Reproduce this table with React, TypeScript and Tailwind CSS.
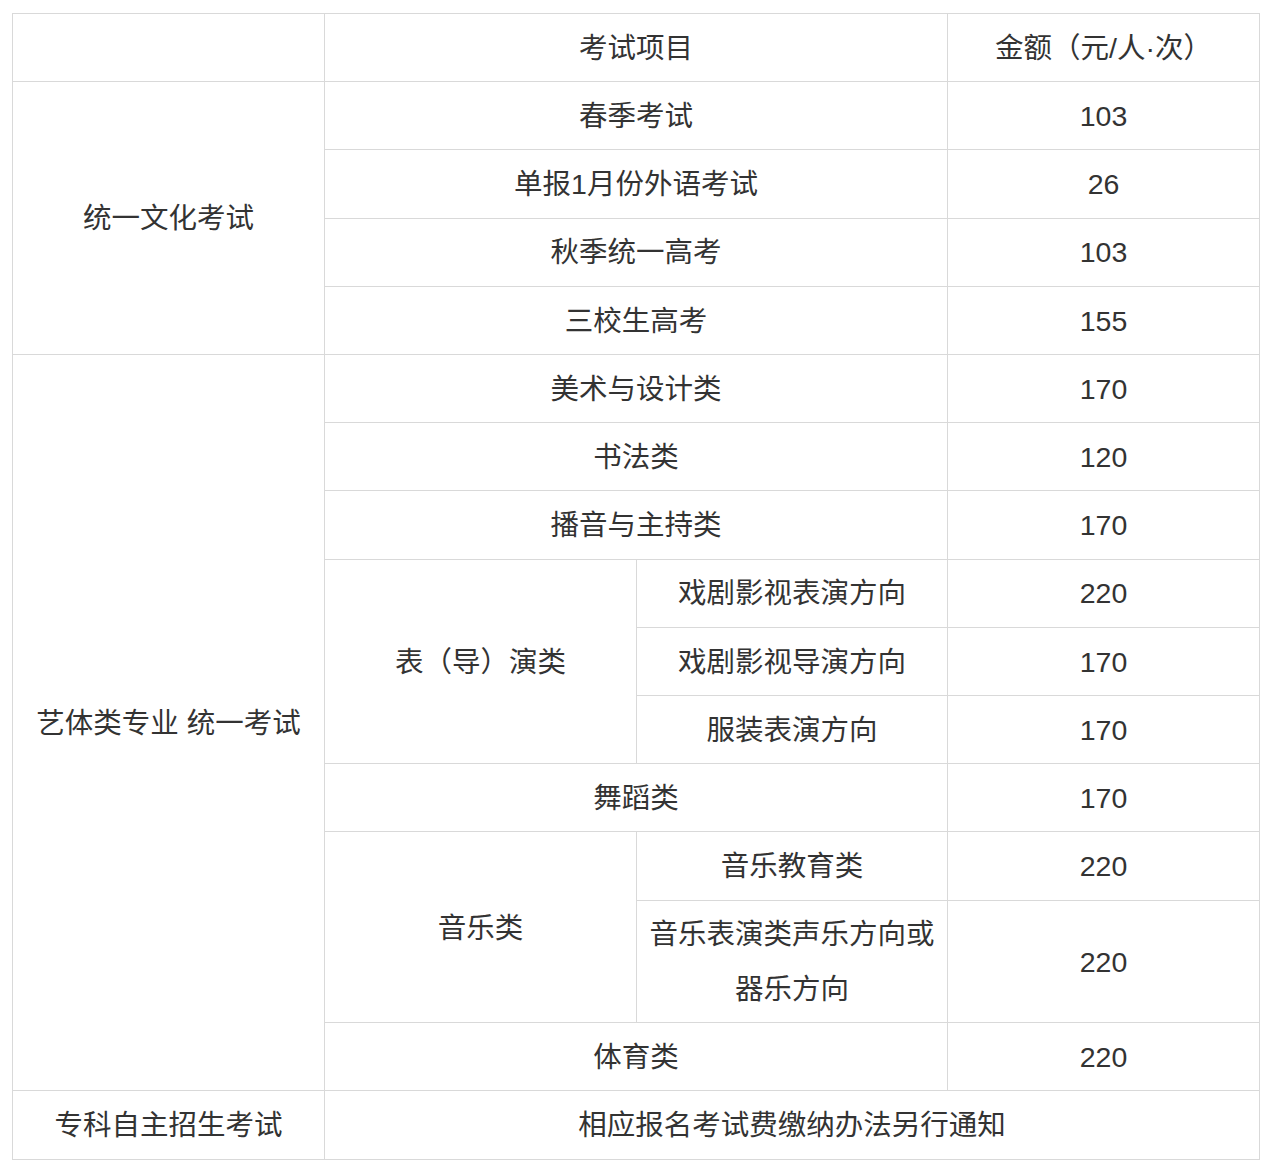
import React from "react";

const cell =
  "border border-[#d9d9d9] text-center align-middle px-[10px] pt-[6.8px] pb-[6px] leading-[54.4px]";

export default function App() {
  return (
    <div
      className="min-h-screen bg-white pt-[13px] pl-[12px] text-[28.5px] text-[#333333]"
      style={{ fontFamily: '"Liberation Sans", "Noto Sans CJK SC", sans-serif' }}
    >
      <table className="w-[1247px] table-fixed border-collapse">
        <colgroup>
          <col className="w-[312px]" />
          <col className="w-[312px]" />
          <col className="w-[311px]" />
          <col className="w-[312px]" />
        </colgroup>
        <tbody>
          <tr>
            <td className={cell}></td>
            <td className={cell} colSpan={2}>考试项目</td>
            <td className={cell}>金额（元/人·次）</td>
          </tr>

          {/* 统一文化考试 */}
          <tr>
            <td className={cell} rowSpan={4}>统一文化考试</td>
            <td className={cell} colSpan={2}>春季考试</td>
            <td className={cell}>103</td>
          </tr>
          <tr>
            <td className={cell} colSpan={2}>单报1月份外语考试</td>
            <td className={cell}>26</td>
          </tr>
          <tr>
            <td className={cell} colSpan={2}>秋季统一高考</td>
            <td className={cell}>103</td>
          </tr>
          <tr>
            <td className={cell} colSpan={2}>三校生高考</td>
            <td className={cell}>155</td>
          </tr>

          {/* 艺体类 */}
          <tr>
            <td className={cell} rowSpan={10}>艺体类专业 统一考试</td>
            <td className={cell} colSpan={2}>美术与设计类</td>
            <td className={cell}>170</td>
          </tr>
          <tr>
            <td className={cell} colSpan={2}>书法类</td>
            <td className={cell}>120</td>
          </tr>
          <tr>
            <td className={cell} colSpan={2}>播音与主持类</td>
            <td className={cell}>170</td>
          </tr>
          <tr>
            <td className={cell} rowSpan={3}>表（导）演类</td>
            <td className={cell}>戏剧影视表演方向</td>
            <td className={cell}>220</td>
          </tr>
          <tr>
            <td className={cell}>戏剧影视导演方向</td>
            <td className={cell}>170</td>
          </tr>
          <tr>
            <td className={cell}>服装表演方向</td>
            <td className={cell}>170</td>
          </tr>
          <tr>
            <td className={cell} colSpan={2}>舞蹈类</td>
            <td className={cell}>170</td>
          </tr>
          <tr>
            <td className={cell} rowSpan={2}>音乐类</td>
            <td className={cell}>音乐教育类</td>
            <td className={cell}>220</td>
          </tr>
          <tr>
            <td className={cell}>音乐表演类声乐方向或器乐方向</td>
            <td className={cell}>220</td>
          </tr>
          <tr>
            <td className={cell} colSpan={2}>体育类</td>
            <td className={cell}>220</td>
          </tr>

          <tr>
            <td className={cell}>专科自主招生考试</td>
            <td className={cell} colSpan={3}>相应报名考试费缴纳办法另行通知</td>
          </tr>
        </tbody>
      </table>
    </div>
  );
}
